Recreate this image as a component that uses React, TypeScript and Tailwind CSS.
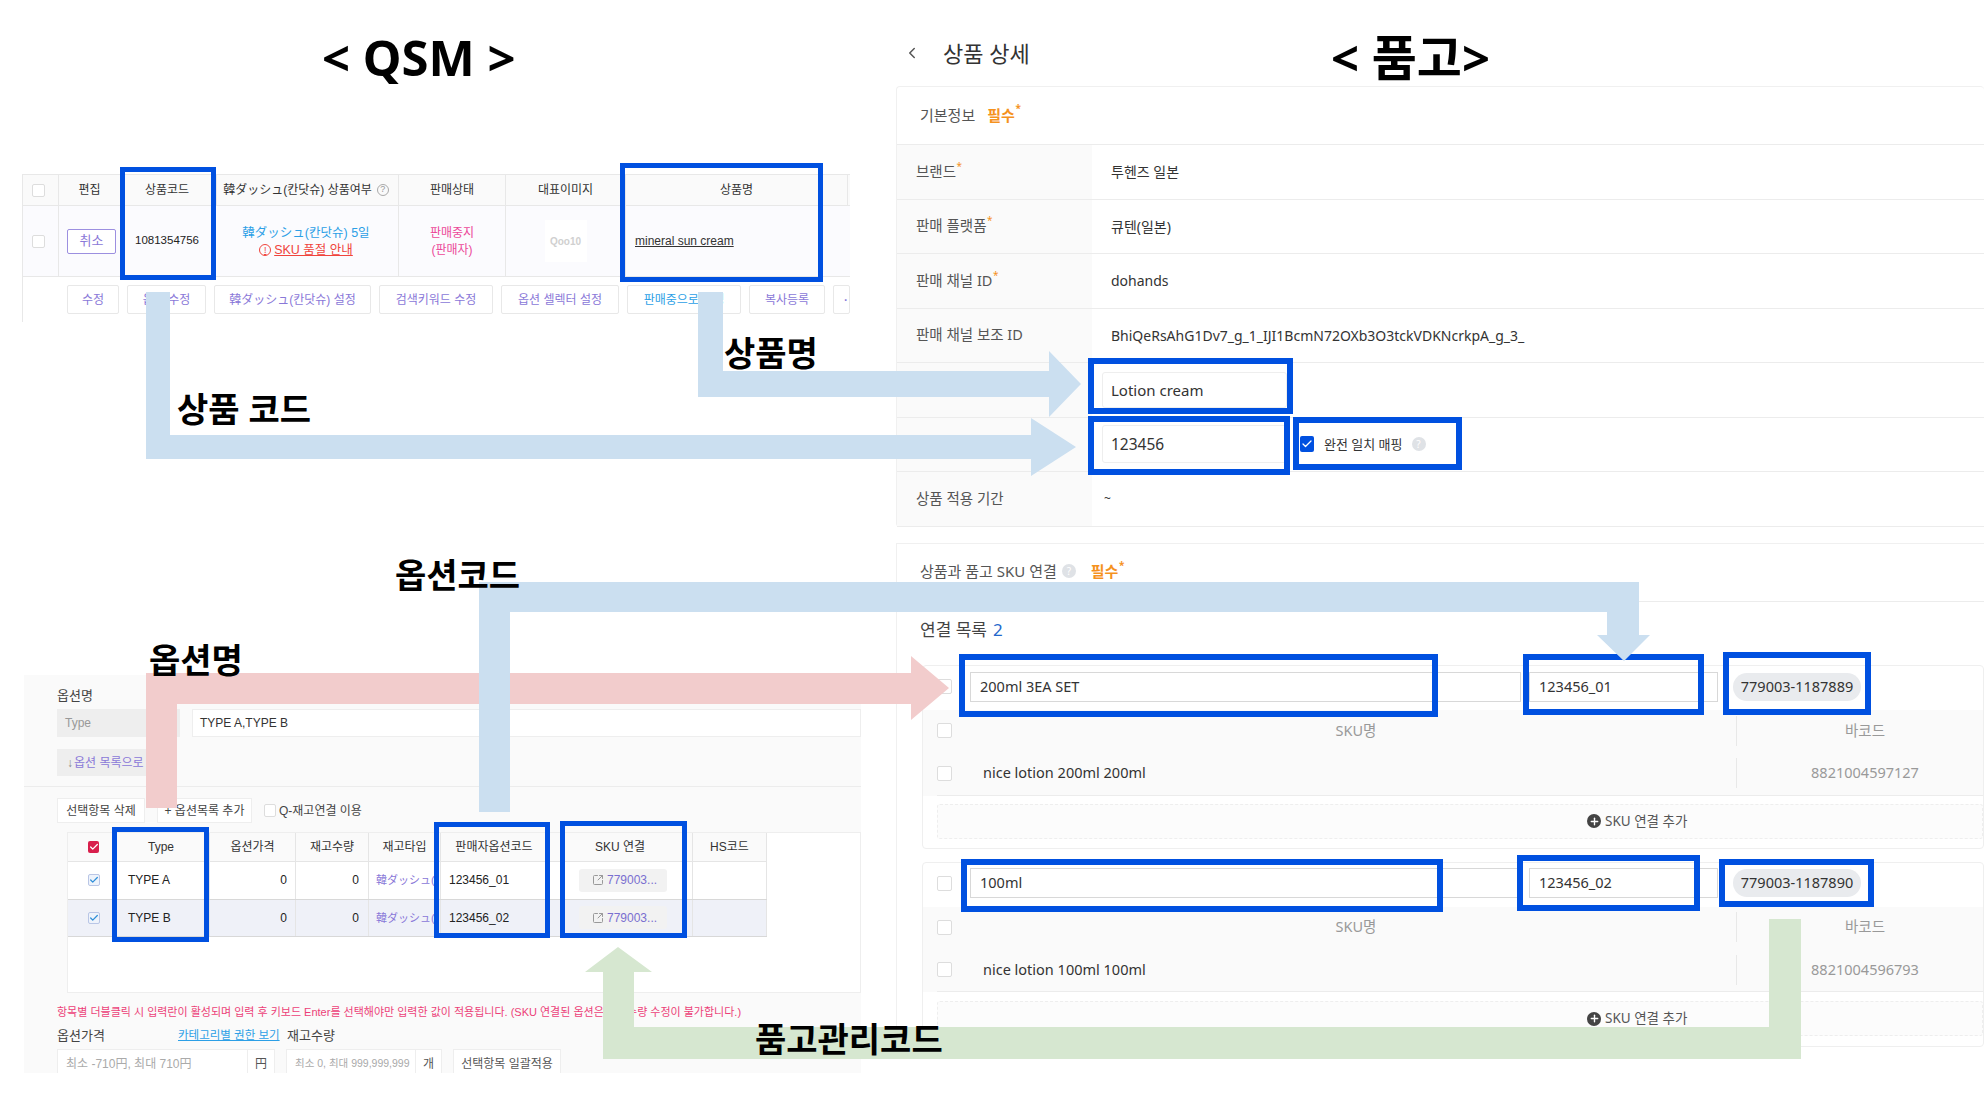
import { ReactNode } from "react";
import { Check, ChevronLeft, Plus, SquareArrowOutUpRight } from "lucide-react";

const DASH = "韓ダッシュ(칸닷슈)";

function Help({ className = "" }: { className?: string }) {
  return (
    <span className={`inline-flex items-center justify-center rounded-full text-[10px] leading-none ${className}`}>?</span>
  );
}

function Box({ className = "" }: { className?: string }) {
  return <span className={`inline-block shrink-0 border border-[#ddd] bg-white rounded-[2px] ${className}`} />;
}

function Required() {
  return (
    <span className="relative text-[15px] font-bold text-[#f5921e]">
      필수
      <span className="absolute -right-[6px] -top-[3px] text-[10px]">*</span>
    </span>
  );
}

function TopHead({ children, className = "" }: { children?: ReactNode; className?: string }) {
  return (
    <div className={`flex items-center justify-center border-r border-[#e8e8e8] text-[12px] text-[#333] whitespace-nowrap ${className}`}>
      {children}
    </div>
  );
}

function ActionBtn({ children, className = "" }: { children: ReactNode; className?: string }) {
  return (
    <div className={`flex h-[29px] shrink-0 items-center justify-center rounded-[2px] border border-[#e8e8e8] bg-white text-[12px] whitespace-nowrap ${className}`}>
      {children}
    </div>
  );
}

function TopTable() {
  return (
    <div className="ml-[22px] mt-[174px] h-[148px] w-[828px] overflow-hidden border-l border-[#e8e8e8]">
      <div className="grid h-[32px] grid-cols-[36px_62px_96px_182px_107px_120px_222px_3px] border-y border-[#e8e8e8] bg-[#fafafa]">
        <TopHead className="pr-[5px]"><Box className="h-[13px] w-[13px]" /></TopHead>
        <TopHead>편집</TopHead>
        <TopHead className="pr-[3px]">상품코드</TopHead>
        <TopHead className="gap-[5px] pr-[3px] text-[12.5px]">
          {DASH} 상품여부
          <span className="flex h-[12px] w-[12px] items-center justify-center rounded-full border border-[#aaa] text-[9px] text-[#999]">?</span>
        </TopHead>
        <TopHead>판매상태</TopHead>
        <TopHead>대표이미지</TopHead>
        <TopHead>상품명</TopHead>
        <div />
      </div>
      <div className="grid h-[71px] grid-cols-[36px_62px_96px_182px_107px_120px_222px_3px] border-b border-[#e8e8e8] bg-[#fbfbfe] text-[12px]">
        <TopHead className="pr-[5px]"><Box className="h-[13px] w-[13px]" /></TopHead>
        <div className="flex items-center pl-[8px]">
          <div className="flex h-[25px] w-[49px] items-center justify-center rounded-[2px] border border-[#9c8fe0] bg-white text-[13px] text-[#8a78d8]">취소</div>
        </div>
        <div className="flex items-center justify-center pr-[4px] text-[11.5px] text-[#222]">1081354756</div>
        <div className="flex flex-col items-center justify-center gap-[1px] border-r border-[#e8e8e8] pr-[3px] text-[12.5px] leading-[16px]">
          <span className="text-[#2c9fe6]">{DASH} 5일</span>
          <span className="flex items-center gap-[3px] text-[#f0443c] underline">
            <span className="flex h-[12px] w-[12px] items-center justify-center rounded-full border border-[#f0443c] text-[9px] no-underline">!</span>
            SKU 품절 안내
          </span>
        </div>
        <div className="flex flex-col items-center justify-center gap-[1px] border-r border-[#e8e8e8] leading-[16px] text-[#ec4899]">
          <span>판매중지</span>
          <span>(판매자)</span>
        </div>
        <div className="flex items-center justify-center border-r border-[#e8e8e8]">
          <div className="flex h-[42px] w-[42px] items-center justify-center bg-white text-[10px] font-bold text-[#d0d0d0]">Qoo10</div>
        </div>
        <div className="flex items-center pl-[9px] text-[#333] underline">mineral sun cream</div>
      </div>
      <div className="flex gap-[8px] pl-[44px] pt-[8px]">
        <ActionBtn className="w-[52px] text-[#8a78d8]">수정</ActionBtn>
        <ActionBtn className="w-[79px] text-[#8a78d8]">옵션 수정</ActionBtn>
        <ActionBtn className="w-[157px] text-[#8a78d8]">{DASH} 설정</ActionBtn>
        <ActionBtn className="w-[114px] text-[12.5px] text-[#8a78d8]">검색키워드 수정</ActionBtn>
        <ActionBtn className="w-[118px] text-[12.5px] text-[#8a78d8]">옵션 셀렉터 설정</ActionBtn>
        <ActionBtn className="w-[114px] text-[#2c9fe6]">판매중으로 변경</ActionBtn>
        <ActionBtn className="w-[76px] text-[#8a78d8]">복사등록</ActionBtn>
        <div className="flex h-[29px] w-[30px] items-center rounded-[2px] border border-[#e8e8e8] bg-white pl-[9px] text-[#8a78d8]">·</div>
      </div>
    </div>
  );
}

function OptionRow({ label, code, shade }: { label: string; code: string; shade?: boolean }) {
  return (
    <div className={`grid h-[37.5px] grid-cols-[45px_97px_86px_73px_72px_107px_145px_74px] border-b border-[#d8d8d8] text-[12px] text-[#222] w-[699px] ${shade ? "bg-[#eff1f8]" : "bg-white"}`}>
      <div className="flex items-center justify-center border-r border-[#e5e5e5] pl-[7px]">
        <span className="flex h-[12px] w-[12px] items-center justify-center rounded-[2px] border border-[#b9c6e6] bg-[#eef3fb]">
          <Check size={10} strokeWidth={3} className="text-[#2f8fd8]" />
        </span>
      </div>
      <div className="flex items-center border-r border-[#e5e5e5] pl-[15px]">{label}</div>
      <div className="flex items-center justify-end border-r border-[#e5e5e5] pr-[8px]">0</div>
      <div className="flex items-center justify-end border-r border-[#e5e5e5] pr-[9px]">0</div>
      <div className="flex items-center whitespace-nowrap border-r border-[#e5e5e5] pl-[7px] text-[11px] text-[#8a78d8]">韓ダッシュ(</div>
      <div className="flex items-center border-r border-[#e5e5e5] pl-[8px]">{code}</div>
      <div className="flex items-center border-r border-[#e5e5e5] pl-[31px]">
        <div className="flex h-[23px] w-[88px] items-center gap-[3px] rounded-[3px] bg-[#f2f2f2] pl-[13px] text-[#7a6fd0]">
          <SquareArrowOutUpRight size={12} className="text-[#999]" />
          779003...
        </div>
      </div>
      <div className="border-r border-[#e5e5e5]" />
    </div>
  );
}

function OptionPanel() {
  const heads = ["", "Type", "옵션가격", "재고수량", "재고타입", "판매자옵션코드", "SKU 연결", "HS코드"];
  return (
    <div className="ml-[24px] mt-[353px] h-[398px] w-[837px] overflow-hidden bg-[#fafafa] text-[12px] text-[#444]">
      <div className="border-b border-[#ececec] pb-[10px] pl-[33px] pt-[12px]">
        <div className="text-[13px] leading-[18px]">옵션명</div>
        <div className="mt-[4px] flex gap-[12px]">
          <div className="flex h-[28px] w-[123px] items-center bg-[#eeeeee] pl-[8px] text-[#999]">Type</div>
          <div className="flex h-[28px] flex-1 items-center border border-[#eee] bg-white pl-[7px] text-[#333]">TYPE A,TYPE B</div>
        </div>
        <div className="mt-[12px] flex h-[27px] w-[120px] items-center gap-[1px] bg-[#eeeeee] pl-[10px] text-[#8a78d8]">
          <span className="text-[#888]">↓</span>옵션 목록으로
        </div>
      </div>
      <div className="ml-[33px] mt-[11px] flex h-[25px] items-center">
        <div className="flex h-[25px] w-[88px] items-center justify-center border border-[#eee] bg-white">선택항목 삭제</div>
        <div className="ml-[12px] flex h-[25px] w-[95px] items-center justify-center border border-[#eee] bg-white">+ 옵션목록 추가</div>
        <Box className="ml-[12px] h-[13px] w-[12px]" />
        <span className="ml-[3px]">Q-재고연결 이용</span>
      </div>
      <div className="ml-[43px] mt-[9px] h-[161px] border border-[#eee] bg-white">
        <div className="grid h-[29px] w-[699px] grid-cols-[45px_97px_86px_73px_72px_107px_145px_74px] border-b border-[#e5e5e5] bg-[#fafafa] text-[#333]">
          {heads.map((h, i) => (
            <div key={i} className={`flex items-center justify-center border-r border-[#e5e5e5] ${i === 0 ? "pl-[7px]" : ""}`}>
              {i === 0 ? (
                <span className="flex h-[12px] w-[11px] items-center justify-center rounded-[2px] bg-[#d81f4c]">
                  <Check size={10} strokeWidth={3} className="text-white" />
                </span>
              ) : h}
            </div>
          ))}
        </div>
        <OptionRow label="TYPE A" code="123456_01" />
        <OptionRow label="TYPE B" code="123456_02" shade />
      </div>
      <div className="ml-[33px] mt-[10px] h-[18px] whitespace-nowrap text-[11px] leading-[18px] text-[#ec3f78]">
        항목별 더블클릭 시 입력란이 활성되며 입력 후 키보드 Enter를 선택해야만 입력한 값이 적용됩니다. (SKU 연결된 옵션은 재고수량 수정이 불가합니다.)
      </div>
      <div className="ml-[33px] mt-[6px] flex h-[18px] items-center text-[13px]">
        <span className="w-[121px]">옵션가격</span>
        <span className="w-[109px] whitespace-nowrap text-[11.5px] text-[#2c9fe6] underline">카테고리별 권한 보기</span>
        <span>재고수량</span>
      </div>
      <div className="ml-[33px] mt-[4px] flex text-[#aaa]">
        <div className="flex h-[30px] w-[218px] items-center border border-[#eee] bg-white pl-[8px]">
          <span className="w-[181px]">최소 -710円, 최대 710円</span>
          <span className="flex h-full flex-1 items-center justify-center border-l border-[#eee] text-[#555]">円</span>
        </div>
        <div className="ml-[11px] flex h-[30px] w-[156px] items-center border border-[#eee] bg-white pl-[8px]">
          <span className="w-[120px] whitespace-nowrap text-[10.5px]">최소 0, 최대 999,999,999</span>
          <span className="flex h-full flex-1 items-center justify-center border-l border-[#eee] text-[#555]">개</span>
        </div>
        <div className="ml-[11px] flex h-[30px] w-[108px] items-center justify-center border border-[#eee] bg-white text-[#555]">선택항목 일괄적용</div>
      </div>
    </div>
  );
}

function InfoRow({ label, star, children }: { label: string; star?: boolean; children?: ReactNode }) {
  return (
    <div className="flex h-[54.5px] border-b border-[#ececec] text-[14.5px]">
      <div className="flex w-[195px] shrink-0 items-center bg-[#fafafa] pl-[19px] text-[#555]">
        <span className="relative">
          {label}
          {star && <span className="absolute -right-[6px] -top-[2px] text-[10px] text-[#f5921e]">*</span>}
        </span>
      </div>
      <div className="flex flex-1 items-center text-[#333]">{children}</div>
    </div>
  );
}

function SkuGroup({ name, code, sku, lotion, barcode, first }: { name: string; code: string; sku: string; lotion: string; barcode: string; first?: boolean }) {
  return (
    <div className={`ml-[25px] rounded-[4px] border border-[#efefef] text-[14.5px] ${first ? "h-[184px] pt-[6px]" : "mt-[13px] h-[185px] pt-[5.5px]"}`}>
      <div className="flex h-[30px] items-center pl-[14px]">
        <Box className="h-[15px] w-[15px]" />
        <div className="ml-[18px] flex h-[30px] w-[551px] items-center border border-[#d8d8d8] pl-[9px] text-[#333]">{name}</div>
        <div className="ml-[8px] flex h-[30px] w-[189px] items-center border border-[#d8d8d8] pl-[9px] text-[#333]">{code}</div>
        <div className="ml-[15px] flex h-[28px] w-[128px] items-center justify-center rounded-full bg-[#e9ebee] text-[#333]">{sku}</div>
      </div>
      <div className="mt-[8.5px] bg-[#fafafa] pl-[14px] text-[#999]">
        <div className="flex h-[41.5px] items-center">
          <Box className="h-[15px] w-[15px]" />
          <div className="ml-[24px] w-[760px] shrink-0 text-center">SKU명</div>
          <div className="h-[30px] border-l border-[#e8e8e8]" />
          <div className="w-[256px] shrink-0 text-center">바코드</div>
        </div>
        <div className="flex h-[44px] items-center border-b border-[#ececec]">
          <Box className="h-[15px] w-[15px]" />
          <div className="ml-[31px] w-[753px] shrink-0 text-[#333]">{lotion}</div>
          <div className="h-[30px] border-l border-[#e8e8e8]" />
          <div className="w-[256px] shrink-0 text-center">{barcode}</div>
        </div>
      </div>
      <div className={`ml-[14px] flex h-[35px] items-center rounded-[3px] border border-dashed border-[#eee] bg-[#fcfcfc] pl-[649px] text-[13.5px] text-[#555] ${first ? "mt-[8px]" : "mt-[9px]"}`}>
        <span className="flex h-[14px] w-[14px] items-center justify-center rounded-full bg-[#444]">
          <Plus size={11} strokeWidth={3} className="text-white" />
        </span>
        <span className="ml-[4px]">SKU 연결 추가</span>
      </div>
    </div>
  );
}

function DetailColumn() {
  return (
    <div className="w-[1088px] font-['Noto_Sans','Noto_Sans_CJK_KR',sans-serif]">
      <div className="flex h-[86px] items-center pl-[7px] pt-[20px]">
        <ChevronLeft size={18} className="text-[#555]" />
        <span className="ml-[22px] text-[22px] text-[#333]">상품 상세</span>
      </div>
      <div className="rounded-[4px] border-t border-l border-[#f0f0f0]">
        <div className="flex h-[58px] items-center gap-[12px] border-b border-[#ececec] pl-[23px] text-[15px] text-[#555]">
          기본정보 <Required />
        </div>
        <InfoRow label="브랜드" star>
          <span className="ml-[19px] text-[14px]">투헨즈 일본</span>
        </InfoRow>
        <InfoRow label="판매 플랫폼" star>
          <span className="ml-[19px] text-[14px]">큐텐(일본)</span>
        </InfoRow>
        <InfoRow label="판매 채널 ID" star>
          <span className="ml-[19px] text-[14px]">dohands</span>
        </InfoRow>
        <InfoRow label="판매 채널 보조 ID">
          <span className="ml-[19px] text-[14px]">BhiQeRsAhG1Dv7_g_1_IJI1BcmN72OXb3O3tckVDKNcrkpA_g_3_</span>
        </InfoRow>
        <InfoRow label="상품명">
          <div className="ml-[10px] flex h-[36px] w-[185px] items-center rounded-[3px] border border-[#eee] pl-[8px] text-[15px]">Lotion cream</div>
        </InfoRow>
        <InfoRow label="상품코드">
          <div className="ml-[10px] flex h-[38px] w-[185px] items-center rounded-[3px] border border-[#eee] pl-[8px] text-[15.5px]">123456</div>
          <span className="ml-[13px] flex h-[16px] w-[14px] items-center justify-center rounded-[2px] bg-[#0050e0]">
            <Check size={12} strokeWidth={2.5} className="text-white" />
          </span>
          <span className="ml-[10px] text-[13px]">완전 일치 매핑</span>
          <Help className="ml-[9px] h-[14px] w-[14px] bg-[#dfe2e6] text-white" />
        </InfoRow>
        <InfoRow label="상품 적용 기간">
          <span className="ml-[12px] text-[12px]">~</span>
        </InfoRow>
      </div>
      <div className="mt-[16px] border-t border-l border-[#f0f0f0]">
        <div className="flex h-[58px] items-center border-b border-[#ececec] pb-[2px] pl-[23px] text-[15px] text-[#555]">
          상품과 품고 SKU 연결
          <Help className="ml-[5px] h-[14px] w-[14px] bg-[#dfe2e6] text-white" />
          <span className="ml-[15px]"><Required /></span>
        </div>
        <div className="flex h-[63px] items-center pb-[7px] pl-[23px] text-[17px] text-[#444]">
          연결 목록 <span className="ml-[6px] text-[#2468cc]">2</span>
        </div>
        <SkuGroup first name="200ml 3EA SET" code="123456_01" sku="779003-1187889" lotion="nice lotion 200ml 200ml" barcode="8821004597127" />
        <SkuGroup name="100ml" code="123456_02" sku="779003-1187890" lotion="nice lotion 100ml 100ml" barcode="8821004596793" />
      </div>
    </div>
  );
}

function Arrows() {
  return (
    <svg className="absolute inset-0 h-full w-full" viewBox="0 0 1984 1114">
      <polygon fill="#cbdff0" points="146,292 170,292 170,435 1031,435 1031,418 1076,447 1031,476 1031,459 146,459" />
      <polygon fill="#cbdff0" points="698,292 723,292 723,371 1049,371 1049,351 1081,384 1049,417 1049,397 698,397" />
      <polygon fill="#f2cccc" points="146,808 177,808 177,704 911,704 911,720 949,688 911,656 911,673 146,673" />
      <polygon fill="#cbdff0" points="479,812 510,812 510,612 1607,612 1607,635 1597,635 1624,661 1650,635 1639,635 1639,582 479,582" />
      <polygon fill="#d6e7d0" points="603,972 585,972 618,947 652,972 634,972 634,1027 1769,1027 1769,919 1801,919 1801,1059 603,1059" />
    </svg>
  );
}

function Highlights() {
  const frame = "absolute border-[#0050e0]";
  return (
    <>
      <div className={`${frame} left-[120px] top-[167px] h-[113px] w-[96px] border-[5px]`} />
      <div className={`${frame} left-[620px] top-[163px] h-[119px] w-[203px] border-[5px]`} />
      <div className={`${frame} left-[112px] top-[827px] h-[115px] w-[97px] border-[5px]`} />
      <div className={`${frame} left-[434px] top-[822px] h-[116px] w-[116px] border-[5px]`} />
      <div className={`${frame} left-[560px] top-[821px] h-[117px] w-[127px] border-[5px]`} />
      <div className={`${frame} left-[1088px] top-[358px] h-[56px] w-[205px] border-[6px]`} />
      <div className={`${frame} left-[1088px] top-[416px] h-[59px] w-[202px] border-[6px]`} />
      <div className={`${frame} left-[1293px] top-[417px] h-[53px] w-[169px] border-[6px]`} />
      <div className={`${frame} left-[959px] top-[654px] h-[63px] w-[479px] border-[6px]`} />
      <div className={`${frame} left-[1523px] top-[654px] h-[61px] w-[181px] border-[6px]`} />
      <div className={`${frame} left-[1723px] top-[652px] h-[63px] w-[148px] border-[6px]`} />
      <div className={`${frame} left-[961px] top-[859px] h-[53px] w-[482px] border-[6px]`} />
      <div className={`${frame} left-[1517px] top-[855px] h-[56px] w-[183px] border-[6px]`} />
      <div className={`${frame} left-[1719px] top-[859px] h-[48px] w-[155px] border-[6px]`} />
    </>
  );
}

function Captions() {
  const cap = "absolute whitespace-nowrap text-[34px] font-bold leading-none text-black";
  return (
    <>
      <div className="absolute left-[322px] top-[27px] whitespace-nowrap text-[49px] font-bold leading-[60px] text-black">&lt; QSM &gt;</div>
      <div className="absolute left-[1331px] top-[27px] whitespace-nowrap text-[49px] font-bold leading-[60px] text-black">&lt; 품고&gt;</div>
      <div className={`${cap} left-[177px] top-[392px]`}>상품 코드</div>
      <div className={`${cap} left-[724px] top-[336px]`}>상품명</div>
      <div className={`${cap} left-[395px] top-[558px]`}>옵션코드</div>
      <div className={`${cap} left-[149px] top-[643px]`}>옵션명</div>
      <div className={`${cap} left-[755px] top-[1022px]`}>품고관리코드</div>
    </>
  );
}

export default function App() {
  return (
    <div className="relative flex h-[1114px] w-[1984px] overflow-hidden bg-white font-['Liberation_Sans','Noto_Sans_CJK_KR',sans-serif]">
      <div className="w-[896px] shrink-0">
        <TopTable />
        <OptionPanel />
      </div>
      <DetailColumn />
      <Highlights />
      <Arrows />
      <div className="font-['Noto_Sans','Noto_Sans_CJK_KR',sans-serif]">
        <Captions />
      </div>
    </div>
  );
}
